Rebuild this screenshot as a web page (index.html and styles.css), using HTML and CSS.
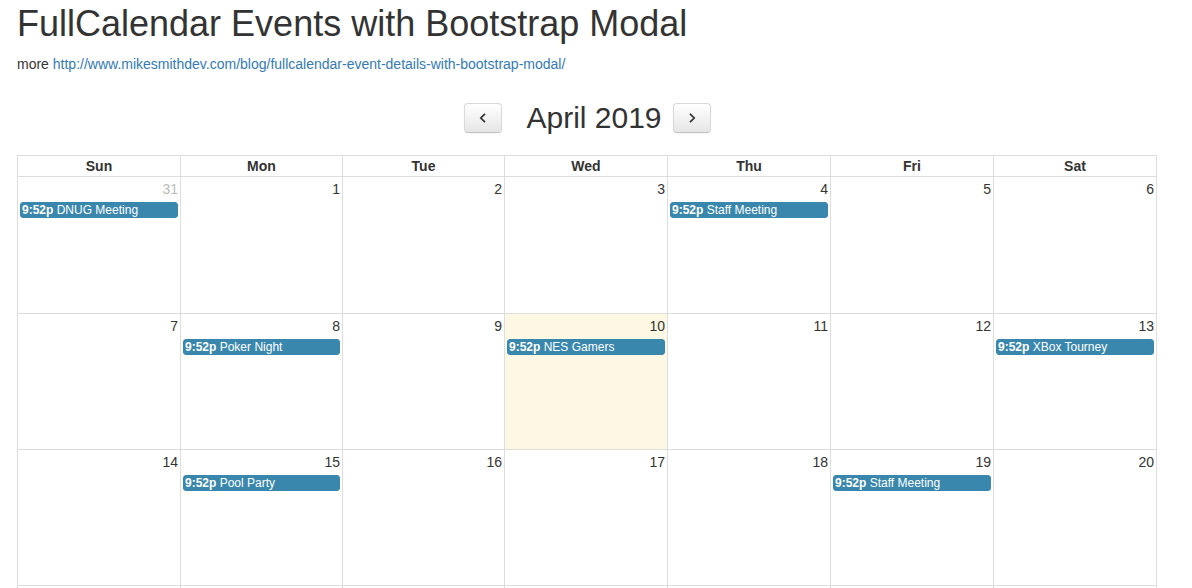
FILE: index.html
```html
<!DOCTYPE html>
<html>

<head>
    <title>FullCalendar Events with Bootstrap Modal</title>
    <link rel="stylesheet" href="styles.css">
</head>

<body>
    <div class="page">
        <h1>FullCalendar Events with Bootstrap Modal</h1>
        <p class="more">more <a href="#">http://www.mikesmithdev.com/blog/fullcalendar-event-details-with-bootstrap-modal/</a></p>

        <div class="toolbar">
            <button class="nav-btn" title="prev">
                <svg width="8" height="10" viewBox="0 0 8 10"><path d="M6 0.8 L1.8 5 L6 9.2" fill="none" stroke="#333" stroke-width="1.7"/></svg>
            </button>
            <h2>April 2019</h2>
            <button class="nav-btn" title="next">
                <svg width="8" height="10" viewBox="0 0 8 10"><path d="M2 0.8 L6.2 5 L2 9.2" fill="none" stroke="#333" stroke-width="1.7"/></svg>
            </button>
        </div>

        <div class="calendar">
            <div class="head">Sun</div>
            <div class="head">Mon</div>
            <div class="head">Tue</div>
            <div class="head">Wed</div>
            <div class="head">Thu</div>
            <div class="head">Fri</div>
            <div class="head">Sat</div>

            <div class="day other"><span class="num">31</span><div class="event"><b>9:52p</b> DNUG Meeting</div></div>
            <div class="day"><span class="num">1</span></div>
            <div class="day"><span class="num">2</span></div>
            <div class="day"><span class="num">3</span></div>
            <div class="day"><span class="num">4</span><div class="event"><b>9:52p</b> Staff Meeting</div></div>
            <div class="day"><span class="num">5</span></div>
            <div class="day"><span class="num">6</span></div>

            <div class="day"><span class="num">7</span></div>
            <div class="day"><span class="num">8</span><div class="event"><b>9:52p</b> Poker Night</div></div>
            <div class="day"><span class="num">9</span></div>
            <div class="day today"><span class="num">10</span><div class="event"><b>9:52p</b> NES Gamers</div></div>
            <div class="day"><span class="num">11</span></div>
            <div class="day"><span class="num">12</span></div>
            <div class="day"><span class="num">13</span><div class="event"><b>9:52p</b> XBox Tourney</div></div>

            <div class="day"><span class="num">14</span></div>
            <div class="day"><span class="num">15</span><div class="event"><b>9:52p</b> Pool Party</div></div>
            <div class="day"><span class="num">16</span></div>
            <div class="day"><span class="num">17</span></div>
            <div class="day"><span class="num">18</span></div>
            <div class="day"><span class="num">19</span><div class="event"><b>9:52p</b> Staff Meeting</div></div>
            <div class="day"><span class="num">20</span></div>

            <div class="day"></div>
            <div class="day"></div>
            <div class="day"></div>
            <div class="day"></div>
            <div class="day"></div>
            <div class="day"></div>
            <div class="day"></div>
        </div>
    </div>
</body>

</html>
```
FILE: styles.css
```css
html {
    --gridColor: #ddd;
    --eventColor: #3a87ad;
    --linkColor: #337ab7;
    --todayColor: #fcf8e3;
}

body {
    margin: 0;
    font-family: "Liberation Sans", Arial, sans-serif;
    font-size: 14px;
    line-height: 20px;
    color: #333;
    background: #fff;
}

.page {
    width: 1140px;
    padding: 0 17px;
}

h1 {
    margin: 4px 0 0;
    font-size: 36px;
    font-weight: 500;
    line-height: 40px;
}

.more {
    margin: 10px 0 0;
}

.more a {
    color: var(--linkColor);
    text-decoration: none;
}

.toolbar {
    display: flex;
    justify-content: center;
    align-items: center;
    padding-left: 1px;
    margin-top: 27px;
    margin-bottom: 21px;
}

.toolbar h2 {
    margin: 0 11px 0 24px;
    font-size: 30px;
    font-weight: 500;
    line-height: 33px;
}

.nav-btn {
    width: 38px;
    height: 30px;
    padding: 0;
    display: flex;
    align-items: center;
    justify-content: center;
    border: 1px solid #d9d9d9;
    border-bottom-color: #c4c4c4;
    border-radius: 4px;
    background: linear-gradient(#fff, #e6e6e6);
    box-shadow: inset 0 1px 0 rgba(255, 255, 255, .2), 0 1px 2px rgba(0, 0, 0, .05);
}

.calendar {
    display: grid;
    grid-template-columns: 163px 162px 162px 163px 163px 163px 163px;
    grid-template-rows: 21px 137px 136px 136px 136px;
    border-right: 1px solid var(--gridColor);
}

.head,
.day {
    border-left: 1px solid var(--gridColor);
    border-top: 1px solid var(--gridColor);
}

.head {
    text-align: center;
    font-weight: bold;
}

.day {
    display: flex;
    flex-direction: column;
}

.num {
    display: block;
    text-align: right;
    padding: 2px;
    height: 20px;
}

.other .num {
    color: #bbb;
}

.today {
    background: var(--todayColor);
}

.event {
    margin: 1px 2px 0;
    padding: 0 1px;
    border: 1px solid var(--eventColor);
    border-radius: 3px;
    background: var(--eventColor);
    color: #fff;
    font-size: 12px;
    line-height: 14px;
    white-space: nowrap;
    overflow: hidden;
}
```
